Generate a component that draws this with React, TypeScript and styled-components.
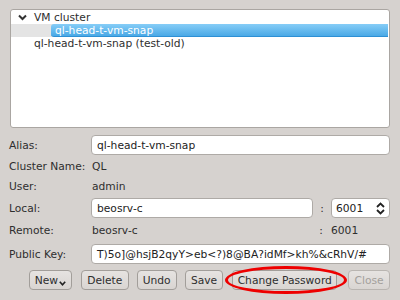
import React from "react";
import styled, { createGlobalStyle } from "styled-components";

const GlobalStyle = createGlobalStyle`
  html, body {
    margin: 0;
    padding: 0;
    background: #d6d2cf;
  }
  body {
    font-family: "DejaVu Sans", "Liberation Sans", sans-serif;
    font-size: 10.7px;
    color: #2e2e2e;
  }
`;

const Window = styled.div`
  width: 400px;
  height: 300px;
  box-sizing: border-box;
  padding: 9px 10px 0 9px;
  display: flex;
  flex-direction: column;
`;

const Tree = styled.div`
  height: 119px;
  margin-left: 1px;
  box-sizing: border-box;
  background: #fff;
  border: 1px solid #aaa6a2;
  border-radius: 3px;
  padding-top: 1px;
  margin-bottom: 6px;
  position: relative;
`;

const TreeRow = styled.div<{ $current?: boolean }>`
  position: relative;
  height: 13px;
  line-height: 13px;
  white-space: nowrap;
  background: ${(p) => (p.$current ? "#e4e4e4" : "transparent")};
  margin-right: 1px;
`;

const Name = styled.span<{ $indent: number }>`
  display: inline-block;
  margin-left: ${(p) => p.$indent}px;
`;

const Arrow = styled.svg`
  position: absolute;
  left: 7px;
  top: 3px;
  width: 9px;
  height: 7px;
`;

const Selected = styled.div`
  margin-left: 40px;
  height: 13px;
  line-height: 13px;
  padding-left: 4px;
  color: #fff;
  border-radius: 3px 0 0 3px;
  background: linear-gradient(#86cdf7, #4aa9e6);
  border-bottom: 1px solid #2e90d4;
  box-sizing: border-box;
`;

const Row = styled.div<{ $h: number }>`
  height: ${(p) => p.$h}px;
  display: grid;
  grid-template-columns: 82px 1fr;
  align-items: center;
`;

const Label = styled.div``;

const Value = styled.div`
  padding-left: 1px;
`;

const Field = styled.div`
  height: 20px;
  box-sizing: border-box;
  background: #fff;
  border: 1px solid #aeaaa6;
  border-radius: 4px;
  padding-left: 5px;
  display: flex;
  align-items: center;
  white-space: nowrap;
  overflow: hidden;
  color: #222;
`;

const Split = styled.div`
  display: flex;
  align-items: center;
`;

const Grow = styled.div`
  flex: 1;
`;

const Colon = styled.div`
  width: 18px;
  text-align: center;
`;

const Spin = styled(Field)`
  width: 59px;
  padding-left: 4px;
  justify-content: space-between;
  padding-right: 4px;
`;

const SpinValue = styled(Value)`
  width: 59px;
`;

const Buttons = styled.div`
  height: 24px;
  display: flex;
  align-items: center;
  padding-left: 20px;
`;

const Button = styled.div<{ $w: number; $gap: number; $disabled?: boolean }>`
  position: relative;
  width: ${(p) => p.$w}px;
  margin-right: ${(p) => p.$gap}px;
  height: 20px;
  box-sizing: border-box;
  border: 1px solid ${(p) => (p.$disabled ? "#b9b5b1" : "#a29e9a")};
  border-radius: 4px;
  background: linear-gradient(#e6e3e1, #d9d5d2);
  color: ${(p) => (p.$disabled ? "#a3a09c" : "#2e2e2e")};
  display: flex;
  align-items: center;
  justify-content: center;
`;

const Circle = styled.div`
  position: absolute;
  left: -8px;
  right: -11px;
  top: -5px;
  bottom: -5px;
  border: 3px solid #ee0000;
  border-radius: 50%;
`;

const MenuMark = styled.svg`
  width: 7px;
  height: 5px;
  margin-top: 6px;
  margin-left: 1px;
`;

export default function App() {
  return (
    <>
      <GlobalStyle />
      <Window>
        <Tree>
          <TreeRow>
            <Arrow viewBox="0 0 9 7">
              <polyline points="1,1.5 4.5,5 8,1.5" fill="none" stroke="#333" strokeWidth="2" />
            </Arrow>
            <Name $indent={23}>VM cluster</Name>
          </TreeRow>
          <TreeRow $current>
            <Selected>ql-head-t-vm-snap</Selected>
          </TreeRow>
          <TreeRow>
            <Name $indent={23}>ql-head-t-vm-snap (test-old)</Name>
          </TreeRow>
        </Tree>

        <Row $h={22}>
          <Label>Alias:</Label>
          <Field>ql-head-t-vm-snap</Field>
        </Row>
        <Row $h={21}>
          <Label>Cluster Name:</Label>
          <Value>QL</Value>
        </Row>
        <Row $h={19}>
          <Label>User:</Label>
          <Value>admin</Value>
        </Row>
        <Row $h={24}>
          <Label>Local:</Label>
          <Split>
            <Grow>
              <Field>beosrv-c</Field>
            </Grow>
            <Colon>:</Colon>
            <Spin>
              6001
              <svg width="9" height="13" viewBox="0 0 9 13">
                <polyline points="1,5 4.5,1.5 8,5" fill="none" stroke="#222" strokeWidth="1.8" />
                <polyline points="1,8 4.5,11.5 8,8" fill="none" stroke="#222" strokeWidth="1.8" />
              </svg>
            </Spin>
          </Split>
        </Row>
        <Row $h={20}>
          <Label>Remote:</Label>
          <Split>
            <Grow>
              <Value>beosrv-c</Value>
            </Grow>
            <Colon>:</Colon>
            <SpinValue>6001</SpinValue>
          </Split>
        </Row>
        <Row $h={28}>
          <Label>Public Key:</Label>
          <Field>T)5o]@hsjB2qyY&gt;eb&lt;?)8@BA?idMf&gt;kh%&amp;cRhV/#</Field>
        </Row>
        <Buttons>
          <Button $w={43} $gap={9}>
            New
            <MenuMark viewBox="0 0 7 5">
              <polyline points="0.8,0.8 3.5,3.8 6.2,0.8" fill="none" stroke="#222" strokeWidth="1.6" />
            </MenuMark>
          </Button>
          <Button $w={48} $gap={8}>Delete</Button>
          <Button $w={40} $gap={8}>Undo</Button>
          <Button $w={39} $gap={9}>Save</Button>
          <Button $w={105} $gap={11}>
            Change Password
            <Circle />
          </Button>
          <Button $w={42} $gap={0} $disabled>Close</Button>
        </Buttons>
      </Window>
    </>
  );
}
